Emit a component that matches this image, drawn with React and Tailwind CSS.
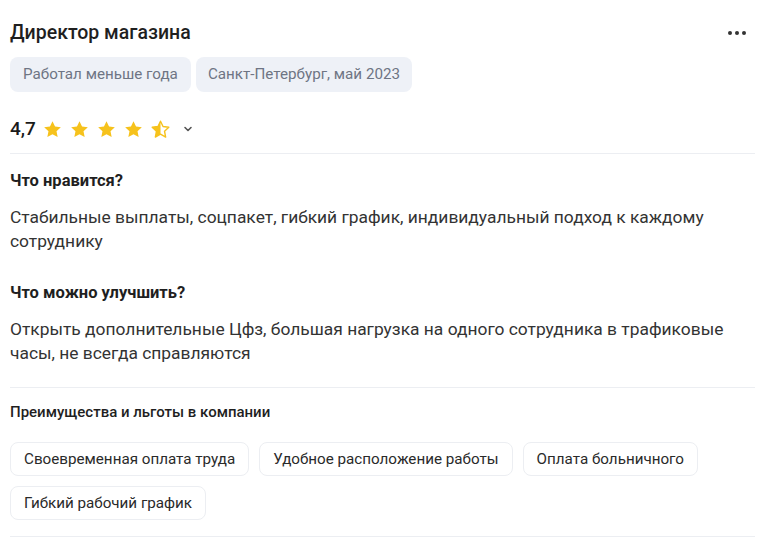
import React from "react";

function Star({ half }) {
  const d = "M12 2.5l2.9 6.1 6.6.8-4.9 4.6 1.3 6.6L12 17.3l-5.9 3.3 1.3-6.6-4.9-4.6 6.6-.8z";
  return (
    <svg width="21" height="21" viewBox="0 0 24 24">
      {half ? (
        <>
          <defs>
            <clipPath id="halfclip">
              <rect x="0" y="0" width="12" height="24" />
            </clipPath>
          </defs>
          <path d={d} fill="none" stroke="#f6c21c" strokeWidth="1.6" strokeLinejoin="round" />
          <path d={d} fill="#f6c21c" clipPath="url(#halfclip)" />
        </>
      ) : (
        <path d={d} fill="#f6c21c" />
      )}
    </svg>
  );
}

export default function App() {
  const benefits = [
    "Своевременная оплата труда",
    "Удобное расположение работы",
    "Оплата больничного",
    "Гибкий рабочий график",
  ];
  return (
    <div className="w-[768px] h-[540px] bg-white overflow-hidden text-[#222] font-['Roboto',sans-serif]">
      <div className="pl-[10px] pr-[13px] pt-[20px]">
        <div className="flex items-center justify-between h-[26px]">
          <h1 className="text-[19.5px] font-medium text-[#1f1f1f]">Директор магазина</h1>
          <div className="flex gap-[3px] mr-[9px]">
            <span className="w-[4px] h-[4px] rounded-full bg-[#333]" />
            <span className="w-[4px] h-[4px] rounded-full bg-[#333]" />
            <span className="w-[4px] h-[4px] rounded-full bg-[#333]" />
          </div>
        </div>
        <div className="flex gap-[5px] mt-[11px]">
          <span className="h-[35px] px-[13px] flex items-center rounded-[8px] bg-[#eef1f7] text-[15.2px] text-[#6e7584]">Работал меньше года</span>
          <span className="h-[35px] px-[12px] flex items-center rounded-[8px] bg-[#eef1f7] text-[15.2px] text-[#6e7584]">Санкт-Петербург, май 2023</span>
        </div>
        <div className="flex items-center mt-[22px] h-[30px]">
          <span className="text-[19px] font-medium text-[#1a1a1a] mr-[6px]">4,7</span>
          <div className="flex gap-[6px]">
            <Star />
            <Star />
            <Star />
            <Star />
            <Star half />
          </div>
          <svg className="ml-[11px]" width="12" height="12" viewBox="0 0 12 12">
            <path d="M3 4.5l3 3 3-3" fill="none" stroke="#555" strokeWidth="1.6" strokeLinecap="round" strokeLinejoin="round" />
          </svg>
        </div>
        <div className="h-px bg-[#eceef2] mt-[9px]" />
        <div className="mt-[16px] text-[16.5px] leading-[22px] font-bold text-[#1f1f1f]">Что нравится?</div>
        <p className="mt-[13px] text-[17.4px] leading-[24px] text-[#333]">
          Стабильные выплаты, соцпакет, гибкий график, индивидуальный подход к каждому сотруднику
        </p>
        <div className="mt-[29px] text-[16.5px] leading-[22px] font-bold text-[#1f1f1f]">Что можно улучшить?</div>
        <p className="mt-[13px] text-[17.4px] leading-[24px] text-[#333]">
          Открыть дополнительные Цфз, большая нагрузка на одного сотрудника в трафиковые часы, не всегда справляются
        </p>
        <div className="h-px bg-[#eceef2] mt-[22px]" />
        <div className="mt-[14px] text-[15px] leading-[20px] font-medium text-[#1f1f1f]">Преимущества и льготы в компании</div>
        <div className="flex flex-wrap gap-x-[10px] gap-y-[10px] mt-[20px] w-[740px]">
          {benefits.map((b) => (
            <span key={b} className="h-[34px] px-[13px] flex items-center rounded-[8px] border border-[#eceef2] text-[15.2px] text-[#2a2a2a]">
              {b}
            </span>
          ))}
        </div>
        <div className="h-px bg-[#eceef2] mt-[16px]" />
      </div>
    </div>
  );
}
